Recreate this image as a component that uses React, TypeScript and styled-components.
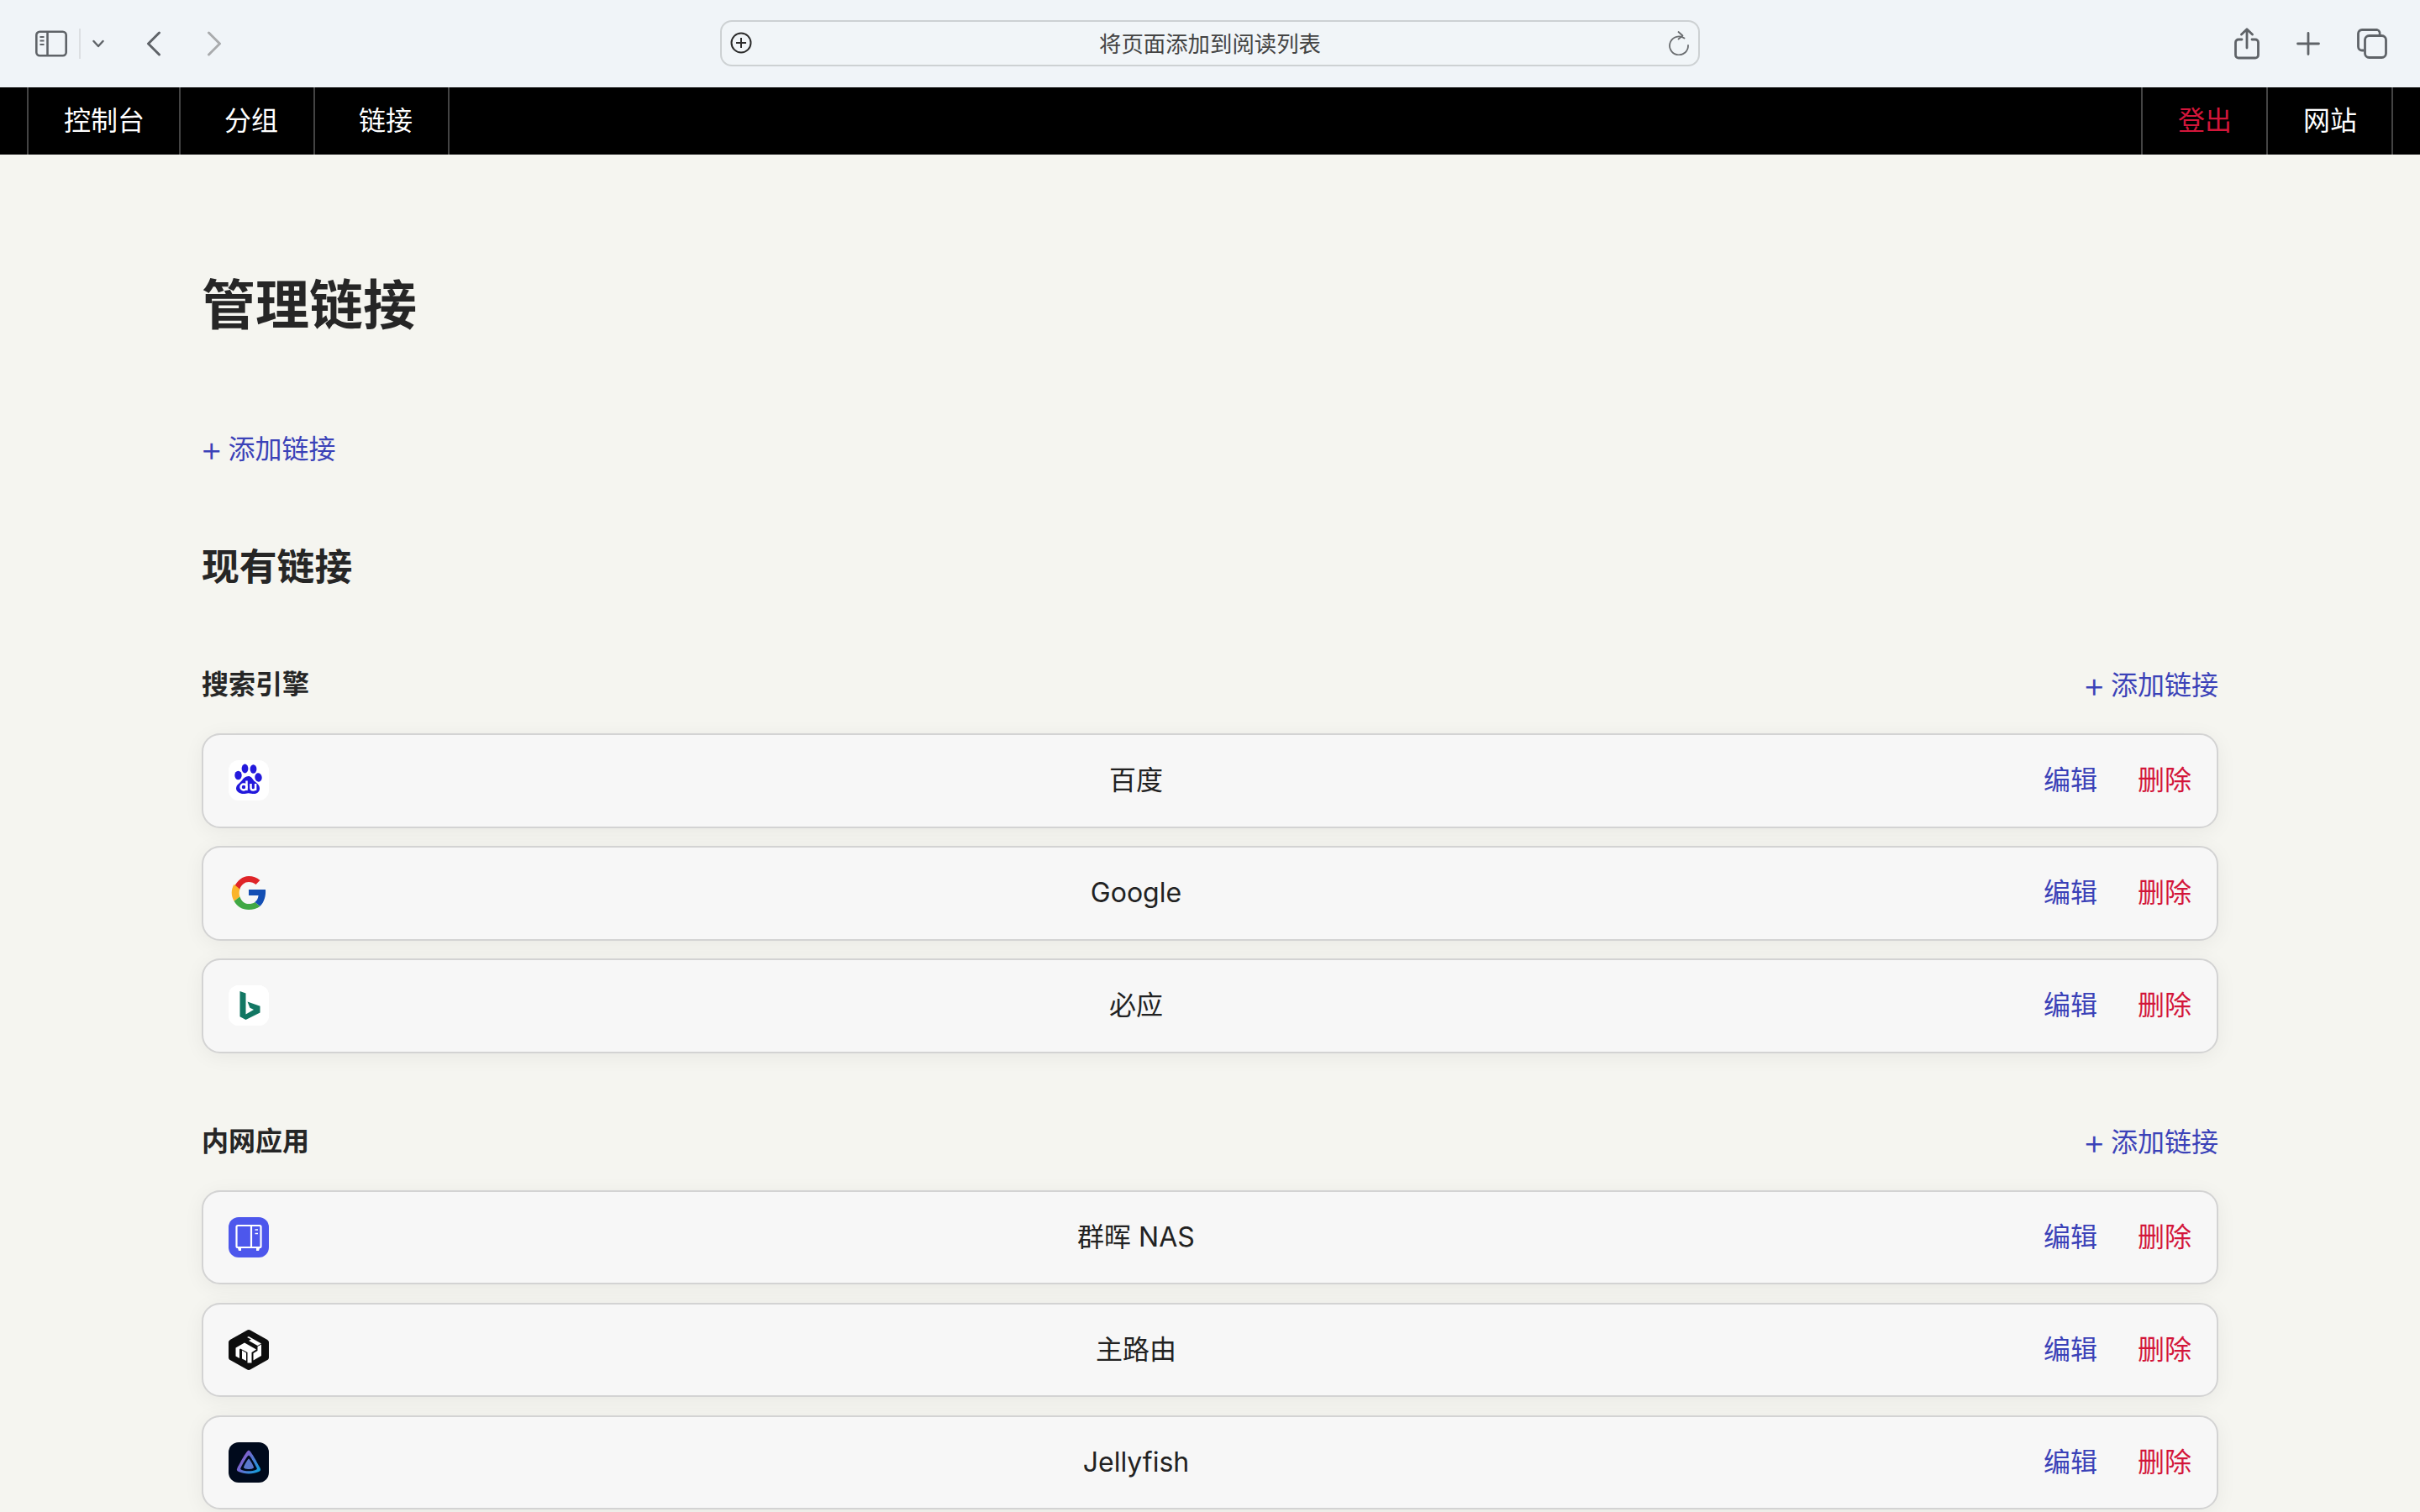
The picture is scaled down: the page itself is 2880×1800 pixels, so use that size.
import React from "react";
import styled, { createGlobalStyle } from "styled-components";

const Global = createGlobalStyle`
  html, body { margin: 0; padding: 0; height: 100%; overflow: hidden; background: #f5f5f0; }
  body { font-family: Inter, "Noto Sans CJK SC", sans-serif; color: #222; }
  * { box-sizing: border-box; }
`;

const Page = styled.div`height: 1800px; overflow: hidden;`;

const Toolbar = styled.header`
  height: 104px; background: #f0f4f8; display: grid; grid-template-columns: 1fr 1164px 1fr;
  align-items: center; padding: 0 39px 0 42px;
`;
const ToolGroup = styled.div<{ $end?: boolean }>`
  display: flex; align-items: center; justify-content: ${p => (p.$end ? "flex-end" : "flex-start")};
  color: #5f6368;
`;
const ToolIcon = styled.svg<{ $ml?: number; $faded?: boolean }>`
  display: block; flex: none; margin-left: ${p => p.$ml ?? 0}px; color: ${p => (p.$faded ? "#a9abad" : "#5f6368")};
`;
const AddressBar = styled.div`
  height: 55px; margin: 0 1px 0 -3px; border: 2px solid #cdd1d3; border-radius: 14px; display: flex; align-items: center;
  justify-content: space-between; padding: 0 10px 0 9px; position: relative; top: -1px; background: #f1f5f8;
`;
const AddressText = styled.span`font-size: 26.4px; color: #444; line-height: 1; padding-top: 2px;`;

const Nav = styled.nav`
  height: 80px; background: #000; display: flex; justify-content: space-between; padding: 0 32px;
`;
const NavGroup = styled.div<{ $closed?: boolean }>`
  display: flex;
  ${p => p.$closed && "border-right: 2px solid #444;"}
`;
const NavLink = styled.a<{ $danger?: boolean; $pl: number; $w: number }>`
  width: ${p => p.$w}px; padding: 0 0 6px ${p => p.$pl}px; height: 80px; display: flex; align-items: center;
  border-left: 2px solid #444; font-size: 32px; color: ${p => (p.$danger ? "#d3163a" : "#fff")};
`;
const NavClose = styled.span`border-left: 2px solid #444; height: 80px; width: 0;`;

const Main = styled.main`padding: 139px 240px 0 240px;`;
const Title = styled.h1`margin: 0 0 107px; font-size: 64px; line-height: 80px; font-weight: 700; color: #262626;`;
const AddLink = styled.a`
  display: block; height: 48px; font-size: 32px; line-height: 48px; color: #3b42b8; white-space: pre;
`;
const PlusSign = styled.span`
  font-size: 42px; font-weight: 300; line-height: 1; margin-left: -2px; margin-right: -3px;
  position: relative; top: 3px;
`;
const Sub = styled.h2`margin: 89px 0 88px; font-size: 44.8px; line-height: 56px; font-weight: 700; color: #262626;`;
const SectionHead = styled.div`display: flex; justify-content: space-between; align-items: center; height: 48px; margin-bottom: 34px;`;
const SectionTitle = styled.h3`margin: 0; font-size: 32px; line-height: 48px; font-weight: 700; color: #262626;`;
const CardList = styled.div`display: flex; flex-direction: column; gap: 21.6px; margin-bottom: 81px;`;
const Card = styled.div`
  height: 112.5px; display: flex; align-items: center; padding: 0 30px 0 30px; background: #f7f7f7;
  border: 2px solid #d3d3d3; border-radius: 22px; box-shadow: 0 4px 24px rgba(0, 0, 0, 0.055);
`;
const IconTile = styled.div<{ $bg?: string }>`
  width: 48px; height: 48px; border-radius: 12px; flex: none; background: ${p => p.$bg ?? "transparent"}; overflow: hidden;
  svg { display: block; width: 48px; height: 48px; }
`;
const Name = styled.div`flex: 1; text-align: center; font-size: 32px; line-height: 48px; color: #222;`;
const Action = styled.a<{ $danger?: boolean }>`
  margin-left: 48px; font-size: 32px; line-height: 48px; color: ${p => (p.$danger ? "#d3163a" : "#3b42b8")};
`;

const Baidu = () => (
  <svg viewBox="0 0 48 48">
    <g fill="#2319dc">
      <ellipse cx="11.5" cy="18" rx="4.2" ry="5.2" />
      <ellipse cx="19.5" cy="10" rx="3.9" ry="5.4" />
      <ellipse cx="29.5" cy="10.5" rx="3.9" ry="5.2" />
      <ellipse cx="35.5" cy="20.5" rx="4.2" ry="5.2" transform="rotate(-8 35.5 20.5)" />
      <path d="M23.6 19c3 0 4.5 2.6 6.3 5 2 2.500 7.100 4.500 7.100 9.500 0 4-3 6.500-6.500 6.500-2.500 0-4.800-.8-6.900-.8s-3.500.8-6 .8C13.500 40 9 37.500 9 33.500c0-4.500 5-6.500 7-9.500 1.800-2.600 4.400-5 7.600-5z" />
    </g>
    <g fill="none" stroke="#fff" strokeWidth="2.500">
      <circle cx="18" cy="32" r="3.500" />
      <path d="M21.500 24.500v11.500" />
      <path d="M26.500 28v4.700c0 1.800 1 2.800 2.700 2.800s2.900-1 2.900-2.800V28M32.100 30v6" />
    </g>
  </svg>
);

const Google = () => (
  <svg viewBox="0 0 48 48">
    <path fill="#df2428" d="M7.500 15.500C10.500 9.600 16.600 4 24 4c5 0 9.800 1.700 13.400 5l-4.900 5c-2.400-2.100-5.200-3-8.500-3-5 0-9.100 3.400-10.800 9.100z" />
    <path fill="#fbb42a" d="M6.500 13.800 13.400 19.600c-1 2.800-1 6 0 8.800l-6.800 5.300C2.800 27 2.800 20.500 6.500 13.800z" />
    <path fill="#40a844" d="M6.600 33.700l6.800-5.300c1.700 5.200 5.600 8.600 10.600 8.600 3 0 5.500-.8 7.300-2.100l6.300 4.900C33.800 42.800 29 44 24 44c-7.800 0-14-4.200-17.400-10.300z" />
    <path fill="#144fb4" d="M24 20h20c.6 7.500-1.500 14.800-6.400 19.800l-6.300-4.900c2.200-1.600 3.700-3.800 4.300-7.900H24z" />
  </svg>
);

const Bing = () => (
  <svg viewBox="0 0 48 48">
    <rect width="48" height="48" fill="#fff" />
    <path fill="#127763" d="M13.500 7l7 2.500v25l9.500-5.500-4.600-2.200-2.900-7.300 15 5.300v7.700L20.500 41l-7-3.800z" />
  </svg>
);

const Nas = () => (
  <svg viewBox="0 0 48 48">
    <rect width="48" height="48" fill="#4d57ec" />
    <g fill="none" stroke="#fff" strokeWidth="2.200">
      <rect x="9.500" y="10" width="29" height="26" rx="1.500" />
      <path d="M27 10v26" />
      <path d="M31.500 15h3.500M31.500 19.500h3.500" strokeWidth="1.600" />
    </g>
    <path fill="#fff" d="M11 37h4v3h-3zM33 37h4l-1 3h-3z" />
  </svg>
);

const Mikrotik = () => (
  <svg viewBox="0 0 48 48">
    <path fill="#0e0e0e" d="M24 0c.8 0 1.500.3 2.200.7l19.600 11c1.400.8 2.200 1.800 2.200 3.300v18c0 1.500-.8 2.500-2.200 3.300l-19.600 11c-1.400.8-3 .8-4.400 0l-19.600-11C.8 35.500 0 34.500 0 33V15c0-1.500.8-2.500 2.200-3.300l19.600-11C22.500.3 23.200 0 24 0z" />
    <g fill="#fff">
      <path d="M24 8l15 8.500-4.500 2.500L24 13l3-1.500L22 9z" />
      <path d="M8.500 21.500L19 15.500l14 8-5.500 3.500v12.500h-5V27l-8.500-4.500-1 1V34l-4.500-2.500z" />
      <path d="M16 24.500l5 3V37l-5-2.500z" />
      <path d="M29.500 28l5-3v-5l4.500-2.500V31l-9.500 5.500z" />
    </g>
  </svg>
);

const Jellyfin = () => (
  <svg viewBox="0 0 48 48">
    <defs>
      <linearGradient id="jf" x1="0" y1="0.200" x2="1" y2="0.850">
        <stop offset="0" stopColor="#a44bc8" />
        <stop offset="1" stopColor="#0da1dc" />
      </linearGradient>
    </defs>
    <rect width="48" height="48" fill="#000a1c" />
    <path fill="url(#jf)" fillRule="evenodd" d="M24 9.500c-2.200 0-9 12.500-13.500 21-1.300 2.500-.6 3.600 1.500 4.600 3.500 1.600 7.500 2.400 12 2.400s8.500-.8 12-2.400c2.100-1 2.800-2.100 1.500-4.600C33 22 26.200 9.500 24 9.500zM24 15.500c-1.400 0-6.800 9.500-9.500 15-.6 1.300-.3 1.800.8 2.200 2.700 1 5.600 1.500 8.700 1.500s6-.5 8.700-1.500c1.100-.4 1.400-.9.800-2.200-2.700-5.500-8.100-15-9.500-15z" />
    <path fill="#5a78cc" d="M24 19.500c-1 0-6 9-6 10.300 0 1.400 3 2.200 6 2.200s6-.8 6-2.200c0-1.300-5-10.300-6-10.300z" />
  </svg>
);

type Item = { name: string; icon: React.ReactNode; bg?: string };
const groups: { title: string; items: Item[] }[] = [
  {
    title: "搜索引擎",
    items: [
      { name: "百度", icon: <Baidu />, bg: "#fff" },
      { name: "Google", icon: <Google /> },
      { name: "必应", icon: <Bing />, bg: "#fff" },
    ],
  },
  {
    title: "内网应用",
    items: [
      { name: "群晖 NAS", icon: <Nas /> },
      { name: "主路由", icon: <Mikrotik /> },
      { name: "Jellyfish", icon: <Jellyfin /> },
    ],
  },
];

const AddButton = () => (
  <AddLink><PlusSign>+</PlusSign> 添加链接</AddLink>
);

export default function App() {
  return (
    <Page>
      <Global />
      <Toolbar>
        <ToolGroup>
          <ToolIcon width="38" height="32" viewBox="0 0 38 32" fill="none" stroke="currentColor" strokeWidth="2.600">
            <rect x="1.300" y="1.800" width="35.400" height="28.400" rx="4" />
            <path d="M14.500 2v28" />
            <path d="M5.500 8h5M5.500 12.500h5M5.500 17h5" strokeWidth="2" />
          </ToolIcon>
          <ToolIcon $ml={14} width="2" height="36" viewBox="0 0 2 36"><rect width="2" height="36" fill="#dcdfe2" /></ToolIcon>
          <ToolIcon $ml={14} width="14" height="10" viewBox="0 0 14 10" fill="none" stroke="currentColor" strokeWidth="2.400" strokeLinecap="round" strokeLinejoin="round">
            <path d="M1.500 2l5.500 6 5.500-6" />
          </ToolIcon>
          <ToolIcon $ml={50} width="18" height="30" viewBox="0 0 18 30" fill="none" stroke="currentColor" strokeWidth="3" strokeLinecap="round" strokeLinejoin="round">
            <path d="M15.500 2L2.500 15l13 13" />
          </ToolIcon>
          <ToolIcon $ml={54} $faded width="18" height="30" viewBox="0 0 18 30" fill="none" stroke="currentColor" strokeWidth="3" strokeLinecap="round" strokeLinejoin="round">
            <path d="M2.500 2l13 13-13 13" />
          </ToolIcon>
        </ToolGroup>
        <AddressBar>
          <ToolIcon width="28" height="28" viewBox="0 0 28 28" fill="none" stroke="#2c2c2c" strokeWidth="2">
            <circle cx="14" cy="14" r="11.500" />
            <path d="M14 8v12M8 14h12" />
          </ToolIcon>
          <AddressText>将页面添加到阅读列表</AddressText>
          <ToolIcon width="26" height="30" viewBox="0 0 26 30" fill="none" stroke="#6a6d70" strokeWidth="1.800" strokeLinecap="round" strokeLinejoin="round">
            <path d="M19.500 9.500A11 11 0 1 0 24 18" />
            <path d="M12.500 2l5 4.500-5 4" />
          </ToolIcon>
        </AddressBar>
        <ToolGroup $end>
          <ToolIcon width="30" height="38" viewBox="0 0 30 38" fill="none" stroke="currentColor" strokeWidth="2.800" strokeLinecap="round" strokeLinejoin="round">
            <path d="M9 14H5a3.500 3.500 0 0 0-3.500 3.500v15A3.500 3.500 0 0 0 5 36h20a3.500 3.500 0 0 0 3.500-3.500v-15A3.500 3.500 0 0 0 25 14h-4" />
            <path d="M15 24V2M8.500 8L15 1.800 21.500 8" />
          </ToolIcon>
          <ToolIcon $ml={44} width="28" height="28" viewBox="0 0 28 28" fill="none" stroke="currentColor" strokeWidth="2.800" strokeLinecap="round">
            <path d="M14 1.500v25M1.500 14h25" />
          </ToolIcon>
          <ToolIcon $ml={44} width="36" height="36" viewBox="0 0 36 36" fill="none" stroke="currentColor" strokeWidth="2.800" strokeLinejoin="round">
            <path d="M8 26H6a4.500 4.500 0 0 1-4.500-4.500V6A4.500 4.500 0 0 1 6 1.500h18A4.500 4.500 0 0 1 27 7" />
            <rect x="9.500" y="8.500" width="25" height="26" rx="5" />
          </ToolIcon>
        </ToolGroup>
      </Toolbar>
      <Nav>
        <NavGroup>
          <NavLink $w={181} $pl={42}>控制台</NavLink>
          <NavLink $w={160} $pl={52}>分组</NavLink>
          <NavLink $w={160} $pl={52}>链接</NavLink>
          <NavClose />
        </NavGroup>
        <NavGroup $closed>
          <NavLink $w={149} $pl={42} $danger>登出</NavLink>
          <NavLink $w={149} $pl={42}>网站</NavLink>
        </NavGroup>
      </Nav>
      <Main>
        <Title>管理链接</Title>
        <AddButton />
        <Sub>现有链接</Sub>
        {groups.map(g => (
          <section key={g.title}>
            <SectionHead>
              <SectionTitle>{g.title}</SectionTitle>
              <AddButton />
            </SectionHead>
            <CardList>
              {g.items.map(i => (
                <Card key={i.name}>
                  <IconTile $bg={i.bg}>{i.icon}</IconTile>
                  <Name>{i.name}</Name>
                  <Action>编辑</Action>
                  <Action $danger>删除</Action>
                </Card>
              ))}
            </CardList>
          </section>
        ))}
      </Main>
    </Page>
  );
}
